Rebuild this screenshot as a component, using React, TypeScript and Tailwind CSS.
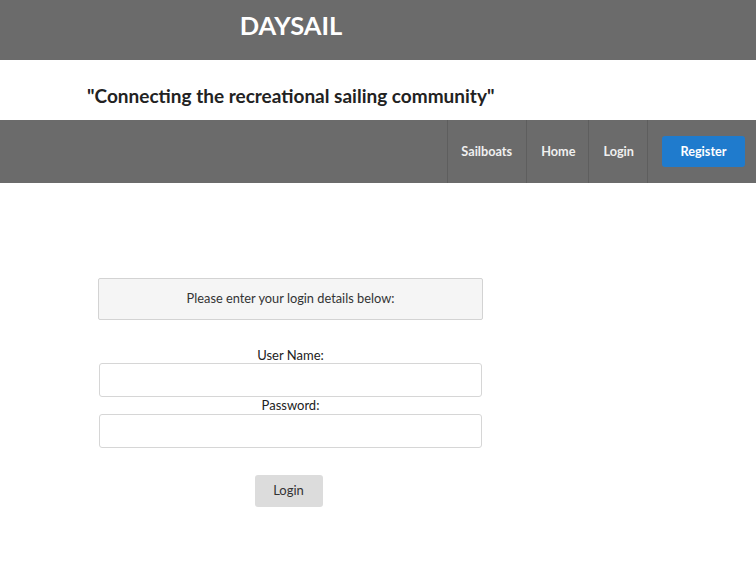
export default function App() {
  return (
    <div className="min-h-[571px] bg-white font-['Lato','Open_Sans',sans-serif] text-[#333]">
      {/* Brand bar */}
      <header className="h-[60px] bg-[#6b6b6b] pt-[12px]">
        <div className="w-[582px] text-center">
          <h1 className="text-[25.5px] font-bold text-white leading-[26px]">DAYSAIL</h1>
        </div>
      </header>

      {/* Tagline */}
      <div className="h-[60px] pt-[25px] pl-[87px]">
        <h2 className="text-[19px] font-bold text-[#222] leading-[22px]">
          "Connecting the recreational sailing community"
        </h2>
      </div>

      {/* Nav */}
      <nav className="h-[63px] bg-[#6b6b6b] flex justify-end items-stretch pr-[11px]">
        <ul className="flex items-stretch text-[12.7px] font-bold text-[#f0f0f0]">
          <li className="flex items-center pl-[13px] pr-[14px] border-l border-[#5e5e5e]">Sailboats</li>
          <li className="flex items-center pl-[14px] pr-[13px] border-l border-[#5e5e5e]">Home</li>
          <li className="flex items-center pl-[14px] pr-[13px] border-l border-[#5e5e5e]">Login</li>
          <li className="flex items-center pl-[14px] border-l border-[#5e5e5e]">
            <span className="w-[83px] h-[31px] rounded-[3px] bg-[#1f7bcd] text-white flex items-center justify-center">
              Register
            </span>
          </li>
        </ul>
      </nav>

      {/* Login form */}
      <main className="pt-[95px] pl-[98px]">
        <div className="w-[385px] flex flex-col items-center">
          <div className="w-full h-[42px] bg-[#f5f5f5] border border-[#d3d3d3] rounded-[2px] flex items-center justify-center text-[12.8px] text-[#333]">
            Please enter your login details below:
          </div>
          <label className="mt-[27px] text-[13px] text-[#222] leading-[16px]">User Name:</label>
          <input className="w-[383px] h-[34px] border border-[#d6d6d6] rounded-[3px] bg-white" type="text" />
          <label className="text-[13px] text-[#222] leading-[17px]">Password:</label>
          <input className="w-[383px] h-[34px] border border-[#d6d6d6] rounded-[3px] bg-white" type="password" />
          <button className="mt-[27px] mr-[4px] w-[68px] h-[32px] rounded-[3px] bg-[#dcdcdc] text-[13px] text-[#333]">
            Login
          </button>
        </div>
      </main>
    </div>
  );
}
